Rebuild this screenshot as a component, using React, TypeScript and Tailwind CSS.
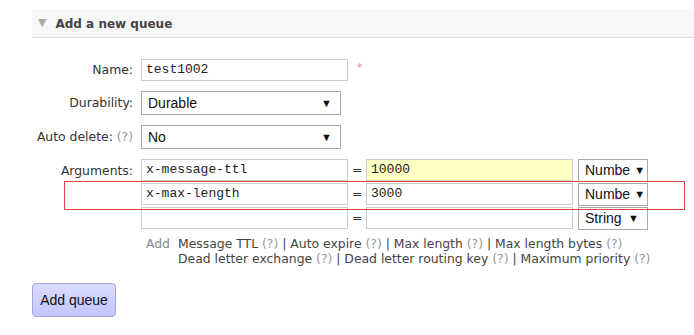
import React from 'react';

const label = "text-right text-[12.4px] text-[#333] pr-2";
const mono = "font-['Liberation_Mono',monospace] text-[13px] text-[#222]";

function FakeSelect({ value, width, height = 'h-[24px]' }: { value: string; width: string; height?: string }) {
  return (
    <div
      className={`${width} ${height} flex items-center justify-between border border-[#a9a9a9] bg-white pl-[6px] pr-[8px] font-['Liberation_Sans',Arial,sans-serif] text-[14px] text-[#111] overflow-hidden`}
    >
      <span className="whitespace-nowrap">{value}</span>
      <span className="text-[11px] ml-1 shrink-0">▼</span>
    </div>
  );
}

function TextBox({ value, yellow }: { value: string; yellow?: boolean }) {
  return (
    <div
      className={`w-[207px] h-[22px] flex items-center border border-[#ccc] px-[4px] ${yellow ? 'bg-[#ffffc4]' : 'bg-white'} ${mono}`}
    >
      {value}
    </div>
  );
}

function ArgRow({ k, v, type, yellow }: { k: string; v: string; type: string; yellow?: boolean }) {
  return (
    <div className="flex items-center h-[22px]">
      <TextBox value={k} />
      <span className="w-[18px] text-center text-[12px] text-[#333]">=</span>
      <TextBox value={v} yellow={yellow} />
      <div className="ml-[5px]">
        <FakeSelect value={type} width="w-[70px]" height="h-[23px]" />
      </div>
    </div>
  );
}

const q = <span className="text-[#999]">(?)</span>;

export default function App() {
  return (
    <div className="relative w-[694px] h-[335px] bg-white font-['DejaVu_Sans',Verdana,sans-serif] overflow-hidden">
      <div className="pt-[10px] pl-[32px]">
        {/* section header */}
        <div className="h-[28px] flex items-center bg-[#f7f7f7] border-b border-[#dcdcdc] pl-[6px]">
          <span className="text-[#aaa] text-[11px] mr-[9px]">▼</span>
          <span className="font-bold text-[12px] text-[#444]">Add a new queue</span>
        </div>

        <div className="grid grid-cols-[109px_auto] items-center mt-[21px] gap-y-[10px]">
          <div className={label}>Name:</div>
          <div className="flex items-center">
            <TextBox value="test1002" />
            <span className="ml-[9px] text-[#e88] text-[11px] -mt-[3px]">*</span>
          </div>

          <div className={label}>Durability:</div>
          <FakeSelect value="Durable" width="w-[200px]" />

          <div className={label}>Auto delete: {q}</div>
          <FakeSelect value="No" width="w-[200px]" />

          <div className={`${label} self-start pt-[3px]`}>Arguments:</div>
          <div className="flex flex-col gap-[2px]">
            <ArgRow k="x-message-ttl" v="10000" type="Numbe" yellow />
            <ArgRow k="x-max-length" v="3000" type="Numbe" />
            <ArgRow k="" v="" type="String" />
          </div>
        </div>

        <div className="flex mt-[7px] ml-[114px] text-[12.4px] leading-[15px] text-[#444]">
          <span className="text-[#888] mr-[8px]">Add</span>
          <div>
            <div>Message TTL {q} | Auto expire {q} | Max length {q} | Max length bytes {q}</div>
            <div>Dead letter exchange {q} | Dead letter routing key {q} | Maximum priority {q}</div>
          </div>
        </div>

        <button className="mt-[17px] w-[84px] h-[34px] rounded-[4px] border border-[#a3a3e0] bg-gradient-to-b from-[#dcdcff] to-[#c4c4ff] font-['Liberation_Sans',Arial,sans-serif] text-[14px] text-[#111]">
          Add queue
        </button>
      </div>

      {/* highlight box around second argument */}
      <div className="absolute left-[64px] top-[181px] w-[621px] h-[29px] border border-[#dd4444]" />
    </div>
  );
}
